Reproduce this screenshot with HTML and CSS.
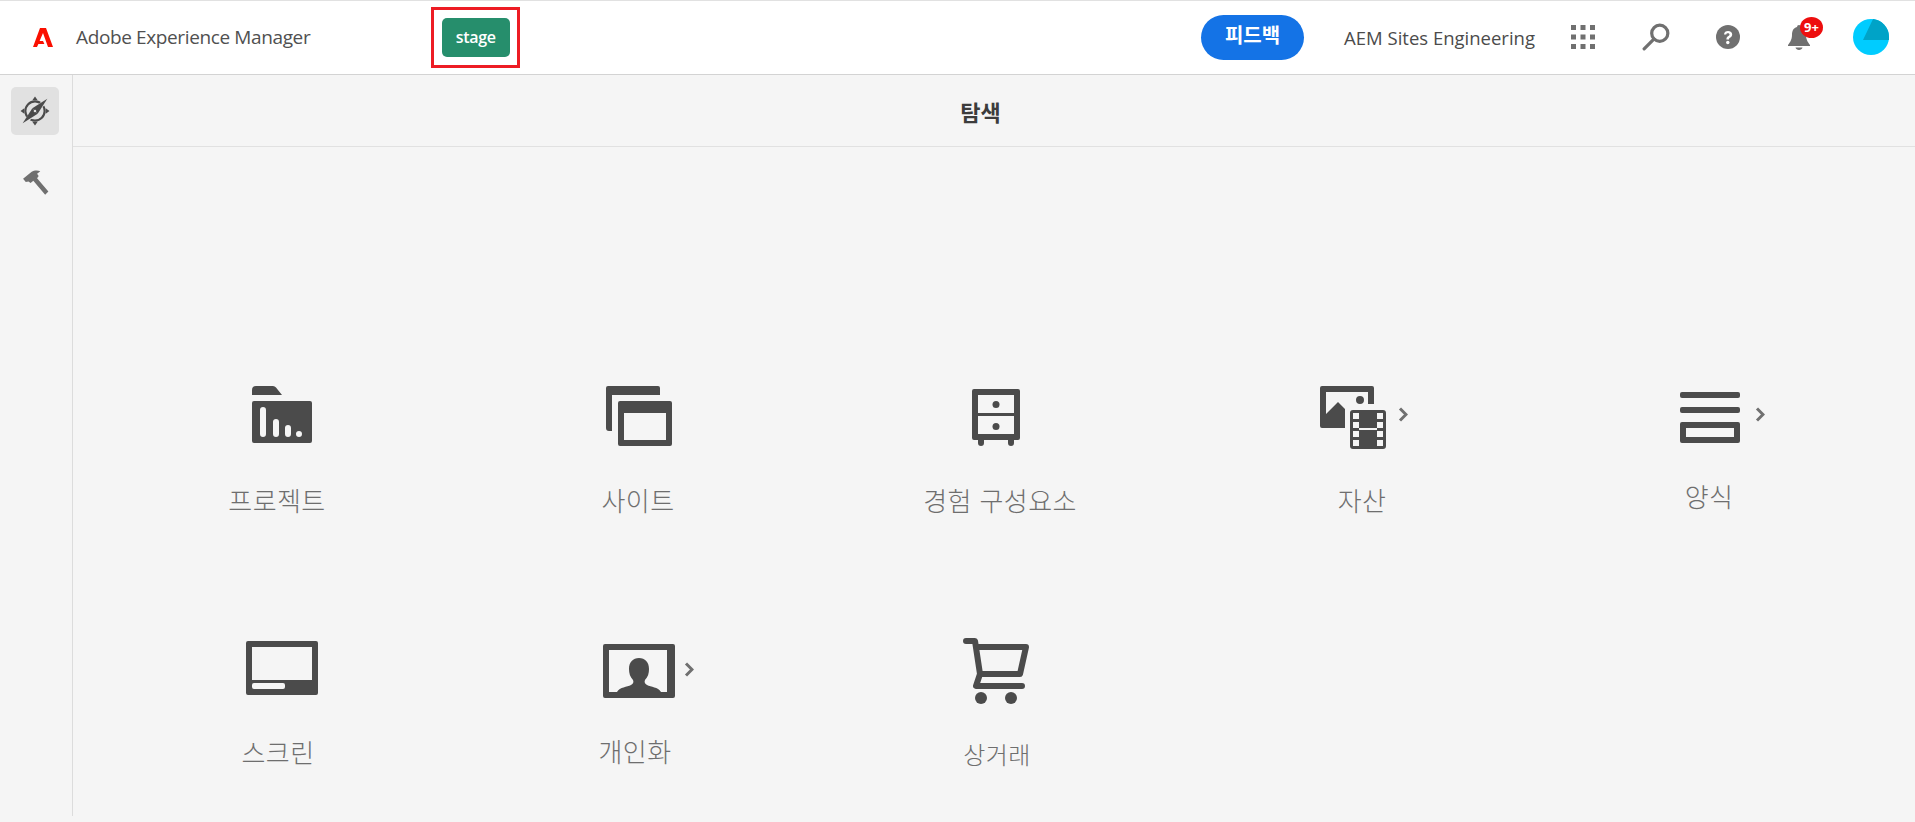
FILE: index.html
```html
<!DOCTYPE html>
<html lang="ko">
<head>
<meta charset="utf-8">
<title>Adobe Experience Manager</title>
<link rel="stylesheet" href="styles.css">
</head>
<body>
<header class="topbar">
  <svg class="logo" viewBox="0 0 20 19"><path d="M7 0h6l7 19h-5L10 5 6.600 13H10l1.400 3H5.400L4 19H0z" fill="#fa0f00"/></svg>
  <span class="brand">Adobe Experience Manager</span>
  <div class="env-mark"><span class="env">stage</span></div>
  <div class="top-actions">
    <button class="feedback">피드백</button>
    <span class="org">AEM Sites Engineering</span>
    <svg class="ti ti-apps" viewBox="0 0 24 24" fill="#707070"><rect x="0" y="0" width="5" height="5"/><rect x="9.500" y="0" width="5" height="5"/><rect x="19" y="0" width="5" height="5"/><rect x="0" y="9.500" width="5" height="5"/><rect x="9.500" y="9.500" width="5" height="5"/><rect x="19" y="9.500" width="5" height="5"/><rect x="0" y="19" width="5" height="5"/><rect x="9.500" y="19" width="5" height="5"/><rect x="19" y="19" width="5" height="5"/></svg>
    <svg class="ti ti-search" viewBox="0 0 26 26" fill="none" stroke="#707070" stroke-width="3"><circle cx="16.500" cy="9.500" r="7.500"/><path d="M11 15 2 24" stroke-linecap="round"/></svg>
    <svg class="ti ti-help" viewBox="0 0 24 24"><circle cx="12" cy="12" r="12" fill="#707070"/><path d="M8 9.500C8 7 10 6 12 6c2.500 0 4.200 1.400 4.200 3.400 0 1.700-1 2.500-2.200 3.300-.8.500-1 .9-1 1.800h-2.600c0-1.700.5-2.500 1.700-3.300.9-.6 1.400-1 1.400-1.700 0-.8-.7-1.300-1.600-1.300-1 0-1.600.5-1.600 1.400z" fill="#fff"/><circle cx="11.800" cy="17.500" r="1.700" fill="#fff"/></svg>
    <div class="bell">
      <svg class="ti-bell" viewBox="0 0 24 26" fill="#707070"><path d="M12 1a2 2 0 0 1 2 2c4 1 5 4.500 5 8 0 5 2.500 8 4 10v1H1v-1c1.500-2 4-5 4-10 0-3.500 1-7 5-8a2 2 0 0 1 2-2z"/><path d="M8.500 23.500h7c-.3 1.600-1.800 2.500-3.500 2.500s-3.200-.9-3.500-2.500z"/></svg>
      <span class="badge">9+</span>
    </div>
    <svg class="avatar" viewBox="0 0 36 36"><circle cx="18" cy="18" r="18" fill="#00ccff"/><path d="M20 0.100A18 18 0 0 1 36 18v3H10z" fill="#00a3c7"/></svg>
  </div>
</header>
<div class="shell">
  <nav class="rail">
    <button class="rail-btn is-active">
      <svg class="rail-compass" viewBox="0 0 28 28"><circle cx="14" cy="14" r="9" fill="none" stroke="#4b4b4b" stroke-width="2"/><path d="M14 0.500l2.500 3.500h-5zM14 27.500l-2.500-3.500h5zM.5 14l3.500-2.500v5zM27.500 14l-3.500 2.500v-5z" fill="#4b4b4b"/><path d="M26 2 3 26" stroke="#e1e1e1" stroke-width="4.500"/><path d="M25.500 2.500 16.500 16.500 11.500 11.500z" fill="#4b4b4b"/><path d="M2.500 25.500 11.500 11.500l5 5z" fill="#4b4b4b"/><circle cx="14" cy="14" r="1.200" fill="#e1e1e1"/></svg>
    </button>
    <button class="rail-btn">
      <svg class="rail-hammer" viewBox="0 0 26 24" fill="#707070"><path d="M1 8 9 1.500c2-1 5-1.400 8-.5l-3 2.500 1.500 2L14 7.500 24.500 20 21.500 23 10.500 10 8 12 6 10.500 3.500 11z"/></svg>
    </button>
  </nav>
  <main class="content">
    <div class="titlebar">탐색</div>
    <div class="tiles">
      <a class="tile t-projects">
        <span class="slot">
          <svg class="glyph" width="60" height="57" viewBox="0 0 60 57" fill="#4b4b4b"><path fill-rule="evenodd" d="M0 9v-5a4 4 0 0 1 4-4h17a4 4 0 0 1 3 1.500l6 7.500zM2 15h56a2 2 0 0 1 2 2v38a2 2 0 0 1-2 2H2a2 2 0 0 1-2-2V17a2 2 0 0 1 2-2zM11 21a3 3 0 0 0-3 3v24a3 3 0 0 0 6 0V24a3 3 0 0 0-3-3zM24 33a3 3 0 0 0-3 3v12a3 3 0 0 0 6 0V36a3 3 0 0 0-3-3zM36 39a3 3 0 0 0-3 3v6a3 3 0 0 0 6 0v-6a3 3 0 0 0-3-3zM47 45a3 3 0 0 0-3 3 3 3 0 0 0 6 0 3 3 0 0 0-3-3z"/></svg>
        </span>
        <span class="tile-label">프로젝트</span>
      </a>
      <a class="tile t-sites">
        <span class="slot">
          <svg class="glyph" width="66" height="60" viewBox="0 0 66 60" fill="#4b4b4b"><path fill-rule="evenodd" d="M2 0h50a2 2 0 0 1 2 2v7H6v36H3a3 3 0 0 1-3-3V2a2 2 0 0 1 2-2zM14 15h50a2 2 0 0 1 2 2v41a2 2 0 0 1-2 2H14a2 2 0 0 1-2-2V17a2 2 0 0 1 2-2zM18 27v27h42V27z"/></svg>
        </span>
        <span class="tile-label">사이트</span>
      </a>
      <a class="tile t-experience">
        <span class="slot">
          <svg class="glyph" width="48" height="57" viewBox="0 0 48 57" fill="#4b4b4b"><path fill-rule="evenodd" d="M2 0h44a2 2 0 0 1 2 2v47a2 2 0 0 1-2 2h-4v3a3 3 0 0 1-6 0v-3H12v3a3 3 0 0 1-6 0v-3H2a2 2 0 0 1-2-2V2a2 2 0 0 1 2-2zM6 6v18h36V6zM6 27v18h36V27z"/><circle cx="24" cy="15.500" r="3.500"/><circle cx="24" cy="37.500" r="3.500"/></svg>
        </span>
        <span class="tile-label">경험 구성요소</span>
      </a>
      <a class="tile t-assets">
        <span class="slot">
          <svg class="glyph" width="66" height="63" viewBox="0 0 66 63" fill="#4b4b4b"><path fill-rule="evenodd" d="M2 0h50a2 2 0 0 1 2 2v16h-6V6H6v22l12-12 7 7v19H2a2 2 0 0 1-2-2V2a2 2 0 0 1 2-2zM40 10a4 4 0 1 1 0 8 4 4 0 0 1 0-8z"/><path fill-rule="evenodd" d="M33 24h30a3 3 0 0 1 3 3v33a3 3 0 0 1-3 3H33a3 3 0 0 1-3-3V27a3 3 0 0 1 3-3zM33 27v6h6v-6zM57 27v6h6v-6zM33 36v6h6v-6zM57 36v6h6v-6zM33 45v6h6v-6zM57 45v6h6v-6zM33 54v6h6v-6zM57 54v6h6v-6zM39 42v2h18v-2z"/></svg>
          <svg class="more" viewBox="0 0 10 15"><path d="M2 1.500 8 7.500 2 13.500" fill="none" stroke="#707070" stroke-width="3"/></svg>
        </span>
        <span class="tile-label">자산</span>
      </a>
      <a class="tile t-forms">
        <span class="slot">
          <svg class="glyph" width="60" height="51" viewBox="0 0 60 51" fill="#4b4b4b"><rect width="60" height="6" rx="2"/><rect y="15" width="60" height="6" rx="2"/><path fill-rule="evenodd" d="M2 30h56a2 2 0 0 1 2 2v17a2 2 0 0 1-2 2H2a2 2 0 0 1-2-2V32a2 2 0 0 1 2-2zM6 36v9h48v-9z"/></svg>
          <svg class="more" viewBox="0 0 10 15"><path d="M2 1.500 8 7.500 2 13.500" fill="none" stroke="#707070" stroke-width="3"/></svg>
        </span>
        <span class="tile-label">양식</span>
      </a>
      <a class="tile t-screens">
        <span class="slot">
          <svg class="glyph" width="72" height="54" viewBox="0 0 72 54" fill="#4b4b4b"><path fill-rule="evenodd" d="M2 0h68a2 2 0 0 1 2 2v50a2 2 0 0 1-2 2H2a2 2 0 0 1-2-2V2a2 2 0 0 1 2-2zM6 6v33h60V6zM8 42a2 2 0 0 0-2 2v2a2 2 0 0 0 2 2h29a2 2 0 0 0 2-2v-2a2 2 0 0 0-2-2z"/></svg>
        </span>
        <span class="tile-label">스크린</span>
      </a>
      <a class="tile t-personal">
        <span class="slot">
          <svg class="glyph" width="72" height="54" viewBox="0 0 72 54" fill="#4b4b4b"><path fill-rule="evenodd" d="M2 0h68a2 2 0 0 1 2 2v50a2 2 0 0 1-2 2H2a2 2 0 0 1-2-2V2a2 2 0 0 1 2-2zM6 6v42h8c3-5 10-5 14-7 2-1 3-3 2-5-3-3-4-7-4-11 0-7 4-11 10-11s10 4 10 11c0 4-1 8-4 11-1 2 0 4 2 5 4 2 11 2 14 7h6V6z"/></svg>
          <svg class="more" viewBox="0 0 10 15"><path d="M2 1.500 8 7.500 2 13.500" fill="none" stroke="#707070" stroke-width="3"/></svg>
        </span>
        <span class="tile-label">개인화</span>
      </a>
      <a class="tile t-commerce">
        <span class="slot">
          <svg class="glyph" width="66" height="66" viewBox="0 0 66 66" fill="#4b4b4b"><path d="M3 3h9l5 33-4 12h46M14 9h49l-6 27H17" fill="none" stroke="#4b4b4b" stroke-width="6" stroke-linecap="round" stroke-linejoin="round"/><circle cx="18" cy="60" r="6"/><circle cx="48" cy="60" r="6"/></svg>
        </span>
        <span class="tile-label">상거래</span>
      </a>
    </div>
  </main>
</div>
</body>
</html>
```

FILE: styles.css
```css
* { box-sizing: border-box; }
html, body { margin: 0; height: 100%; overflow: hidden; }
body {
  background: #f5f5f5;
  font-family: "Noto Sans", "Noto Sans CJK KR", sans-serif;
  color: #4b4b4b;
}
.topbar {
  height: 75px;
  display: flex;
  align-items: center;
  background: #fff;
  border-top: 1px solid #e1e1e1;
  border-bottom: 1px solid #d3d3d3;
  padding: 0 0 1px 33px;
}
.logo { width: 20px; height: 19px; flex: none; margin-top: 1px; }
.brand { margin-left: 23px; font-size: 19px; color: #505050; white-space: nowrap; font-family: "Open Sans", "Noto Sans", sans-serif; letter-spacing: -.375px; }
.env-mark {
  margin-left: 121px;
  width: 89px;
  height: 61px;
  border: 3px solid #ed1c24;
  display: flex;
  align-items: center;
  justify-content: center;
}
.env {
  width: 68px;
  height: 39px;
  background: #268e6c;
  border-radius: 5px;
  color: #fff;
  font-size: 16px;
  font-weight: 600;
  letter-spacing: -.3px;
  display: flex;
  align-items: center;
  justify-content: center;
  font-family: "Open Sans", sans-serif;
}
.top-actions { margin-left: auto; display: flex; align-items: center; padding-right: 26px; }
.feedback {
  width: 103px;
  height: 45px;
  border: 0;
  border-radius: 23px;
  background: #1473e6;
  color: #fff;
  font: 700 20px "Noto Sans CJK KR", sans-serif;
  padding: 0 0 5px;
}
.org { margin-left: 40px; font-size: 18.500px; color: #4b4b4b; font-family: "Open Sans", sans-serif; white-space: nowrap; }
.ti { display: block; flex: none; }
.ti-apps { width: 24px; height: 24px; margin-left: 36px; }
.ti-search { width: 28px; height: 28px; margin-left: 47px; }
.ti-help { width: 24px; height: 24px; margin-left: 46px; }
.bell { position: relative; width: 24px; height: 26px; margin-left: 47px; }
.ti-bell { display: block; width: 24px; height: 26px; }
.badge {
  position: absolute;
  left: 13px;
  top: -7px;
  width: 23px;
  height: 21px;
  border-radius: 50%;
  background: #ed0e0e;
  color: #fff;
  font: 700 13px/20px "Open Sans", sans-serif;
  text-align: center;
}
.avatar { width: 36px; height: 36px; margin-left: 42px; flex: none; }
.shell { display: flex; height: 747px; overflow: hidden; }
.rail {
  width: 73px;
  height: 741px;
  flex: none;
  border-right: 1px solid #dcdcdc;
  padding: 12px 0 0 11px;
  display: flex;
  flex-direction: column;
  gap: 24px;
}
.rail-btn {
  width: 48px;
  height: 48px;
  border: 0;
  border-radius: 5px;
  background: transparent;
  padding: 0;
  display: flex;
  align-items: center;
  justify-content: center;
}
.rail-btn.is-active { background: #e1e1e1; }
.rail-compass { width: 30px; height: 30px; }
.rail-hammer { width: 28px; height: 26px; margin-left: 2px; }
.content { flex: 1; min-width: 0; }
.titlebar {
  height: 72px;
  border-bottom: 1px solid #e1e1e1;
  display: flex;
  align-items: center;
  justify-content: center;
  padding-right: 27px;
  font: 700 22px "Noto Sans CJK KR", sans-serif;
  color: #3c3c3c;
}
.tiles {
  display: grid;
  grid-template-columns: repeat(5, 360px);
  grid-template-rows: 252px auto;
  padding: 239px 0 0 24px;
}
.tile {
  --ix: 0px;
  --iy: 0px;
  --lx: 0px;
  --ly: 0px;
  display: flex;
  flex-direction: column;
  align-items: center;
}
.t-projects   { --ix: 5px; }
.t-sites      { --ix: 2px; --lx: 1px; }
.t-experience { --ix: -1px; --iy: 3px; --lx: 3px; }
.t-assets     { --ix: -4px; --lx: 5px; }
.t-forms      { --ix: -7px; --iy: 6px; --lx: -8px; --ly: -4px; }
.t-screens    { --ix: 5px; --iy: 3px; --lx: 1px; }
.t-personal   { --ix: 2px; --iy: 6px; --lx: -2px; --ly: -1px; }
.t-commerce   { --ix: -1px; --ly: 2px; }
.slot {
  position: relative;
  display: block;
  height: 56px;
  padding-top: var(--iy);
  margin-left: calc(var(--ix) * 2);
}
.glyph { display: block; }
.more { position: absolute; width: 10px; height: 15px; }
.t-assets .more   { left: calc(100% + 12px); top: 21px; }
.t-forms .more    { left: calc(100% + 15px); top: 21px; }
.t-personal .more { left: calc(100% + 9px); top: 24px; }
.tile-label {
  font: 300 26px/32px "Noto Sans CJK KR", sans-serif;
  letter-spacing: .4px;
  color: #6e6e6e;
  white-space: nowrap;
  margin-top: calc(42px + var(--ly));
  margin-left: calc(var(--lx) * 2);
}
.t-commerce .tile-label { font-size: 24px; }
```
